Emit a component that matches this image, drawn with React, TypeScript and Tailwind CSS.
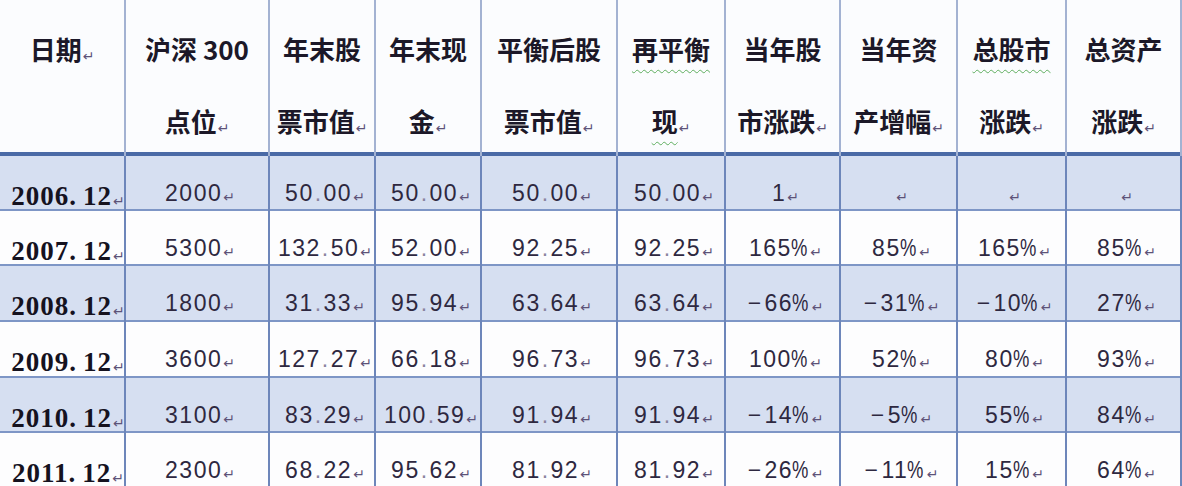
import React from "react";

const cols = "grid-cols-[126px_144px_106px_106px_136px_108px_115px_117px_109px_115px]";

const Mark = () => (
  <span
    className="inline-block align-baseline text-[14px] ml-[1px] translate-y-[1px] text-[#5d5278] font-normal tracking-normal"
    style={{ fontFamily: '"DejaVu Sans", sans-serif' }}
  >
    ↵
  </span>
);

type H = { l1: React.ReactNode; l2: React.ReactNode };

const wavy =
  "underline decoration-wavy decoration-[#5fae5f] decoration-1 underline-offset-[9px]";

const headers: H[] = [
  { l1: <>日期<Mark /></>, l2: null },
  { l1: <>沪深 300</>, l2: <>点位<Mark /></> },
  { l1: <>年末股</>, l2: <>票市值<Mark /></> },
  { l1: <>年末现</>, l2: <>金<Mark /></> },
  { l1: <>平衡后股</>, l2: <>票市值<Mark /></> },
  { l1: <span className={wavy}>再平衡</span>, l2: <><span className={wavy}>现</span><Mark /></> },
  { l1: <>当年股</>, l2: <>市涨跌<Mark /></> },
  { l1: <>当年资</>, l2: <>产增幅<Mark /></> },
  { l1: <span className={wavy}>总股市</span>, l2: <>涨跌<Mark /></> },
  { l1: <>总资产</>, l2: <>涨跌<Mark /></> },
];

const rows: string[][] = [
  ["2006.12", "2000", "50.00", "50.00", "50.00", "50.00", "1", "", "", ""],
  ["2007.12", "5300", "132.50", "52.00", "92.25", "92.25", "165%", "85%", "165%", "85%"],
  ["2008.12", "1800", "31.33", "95.94", "63.64", "63.64", "-66%", "-31%", "-10%", "27%"],
  ["2009.12", "3600", "127.27", "66.18", "96.73", "96.73", "100%", "52%", "80%", "93%"],
  ["2010.12", "3100", "83.29", "100.59", "91.94", "91.94", "-14%", "-5%", "55%", "84%"],
  ["2011.12", "2300", "68.22", "95.62", "81.92", "81.92", "-26%", "-11%", "15%", "64%"],
];

const heights = ["h-[55px]", "h-[55px]", "h-[56px]", "h-[56px]", "h-[55px]", "h-[56px]"];

const Num = ({ v }: { v: string }) => {
  const m = v.match(/^(-?)([\d.]+)(%?)$/);
  if (!m) return <>{v}</>;
  const [, neg, num, pct] = m;
  const parts = num.split(".");
  return (
    <>
      {neg && <span className="mr-[2px]">−</span>}
      {parts[0]}
      {parts.length > 1 && (
        <>
          <span className="text-[#8a84a0] mx-[1px]">.</span>
          {parts[1]}
        </>
      )}
      {pct && <span className="inline-block scale-x-[0.8] -ml-[3px] tracking-normal">%</span>}
    </>
  );
};

export default function App() {
  return (
    <div className="w-[1182px] h-[486px] overflow-hidden bg-[#fbfbfd]">
      <div className={"grid " + cols + " h-[156px] border-b-[4px] border-[#4a6aa6] bg-[#fbfcfe]"}>
        {headers.map((h, i) => (
          <div
            key={i}
            className="border-r-2 border-[#a3b2d2] text-center pt-[13px] text-[26px] leading-[72px] font-bold text-[#1c1828] whitespace-nowrap"
            style={{ fontFamily: '"Noto Sans CJK SC", "Noto Sans", sans-serif' }}
          >
            <div>{h.l1}</div>
            <div>{h.l2}</div>
          </div>
        ))}
      </div>
      {rows.map((r, ri) => (
        <div
          key={ri}
          className={
            "grid " +
            cols +
            " " +
            heights[ri] +
            " border-b-2 border-[#7e96c6] " +
            (ri % 2 === 0 ? "bg-[#d6dff1]" : "bg-[#fdfdfe]")
          }
        >
          {r.map((c, ci) => (
            <div
              key={ci}
              className={
                "border-r-2 border-[#6d86ba] flex items-center justify-center whitespace-nowrap " +
                (ci === 0 ? "pt-[20px]" : "pt-[13px]")
              }
            >
              {ci === 0 ? (
                <span
                  className="text-[27px] font-bold text-[#15121f] tracking-[1px] ml-[12px]"
                  style={{ fontFamily: '"Liberation Serif", serif' }}
                >
                  {c.slice(0, 4)}
                  <span className="mr-[6px]">.</span>
                  {c.slice(5)}
                  <Mark />
                </span>
              ) : (
                <span
                  className="text-[23px] text-[#2e2840] tracking-[1.5px] ml-[6px]"
                  style={{ fontFamily: '"Liberation Sans", sans-serif' }}
                >
                  <Num v={c} />
                  <Mark />
                </span>
              )}
            </div>
          ))}
        </div>
      ))}
    </div>
  );
}
